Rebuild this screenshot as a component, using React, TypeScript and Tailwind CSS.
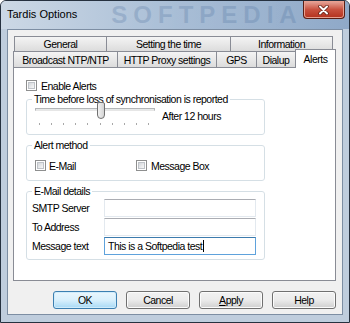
import type { ReactNode } from "react";

const ui = "font-['Liberation_Sans',Arial,sans-serif] text-[10.5px] tracking-[-0.5px] leading-[12px] text-black";

function CheckBox() {
  return (
    <span className="flex h-[11px] w-[11px] shrink-0 items-center justify-center border border-[#8e8f8f] bg-white">
      <span className="h-[7px] w-[7px] border border-[#bfc3c8] bg-linear-to-br from-[#d4d7db] to-[#f8f8f8]" />
    </span>
  );
}

function Tab({ label, w, last }: { label: string; w: string; last?: boolean }) {
  return (
    <div
      className={`${w} flex h-full items-center justify-center border-t border-l border-[#898c95] bg-linear-to-b from-[#f4f4f4] to-[#dcdcdc] whitespace-nowrap ${
        last ? "border-r" : ""
      }`}
    >
      {label}
    </div>
  );
}

function Group({ title, h, children }: { title: string; h: string; children: ReactNode }) {
  return (
    <fieldset className={`${h} w-[239px] rounded-[3px] border border-[#d5dfe5]`}>
      <legend className="ml-[5px] px-[2px] leading-[12px] whitespace-nowrap">{title}</legend>
      {children}
    </fieldset>
  );
}

function TextBox({ value, focused }: { value?: string; focused?: boolean }) {
  return (
    <div
      className={`flex h-[18px] w-[152px] items-center border px-[3px] ${
        focused
          ? "border-[#5fa2dc] border-t-[#3d7bad]"
          : "border-[#e3e9ef] border-t-[#abadb3]"
      } bg-white`}
    >
      {value && (
        <>
          <span className="whitespace-nowrap">{value}</span>
          <span className="ml-px h-[12px] w-px bg-black" />
        </>
      )}
    </div>
  );
}

function Button({ children, primary }: { children: ReactNode; primary?: boolean }) {
  return (
    <div
      className={`flex h-[18px] w-[64px] items-center justify-center rounded-[3px] border ${
        primary
          ? "border-[#3c7fb1] bg-linear-to-b from-[#eaf6fd] via-[#d9f0fc] to-[#a7d9f5] shadow-[inset_0_0_0_1px_#d0ecfb]"
          : "border-[#707070] bg-linear-to-b from-[#f2f2f2] via-[#ebebeb] to-[#cfcfcf] shadow-[inset_0_0_0_1px_#fbfbfb]"
      }`}
    >
      {children}
    </div>
  );
}

export default function App() {
  const ticks = Array.from({ length: 10 }, (_, i) => i);

  return (
    <div className={`${ui} flex h-[323px] w-[350px] flex-col overflow-hidden rounded-t-[6px] border border-[#26313f] bg-[#bfcddd]`}>
      {/* title bar */}
      <div className="flex h-[28px] shrink-0 items-start bg-linear-to-r from-[#ccd8e5] via-[#a9bed6] to-[#8fa9c8]">
        <span className="mt-[7px] ml-[6px] shrink-0 font-['Liberation_Sans',Arial,sans-serif] text-[11px] leading-[13px] tracking-normal whitespace-nowrap text-black">
          Tardis Options
        </span>
        <span className="mt-[1px] ml-[34px] shrink-0 font-['Liberation_Sans',Arial,sans-serif] text-[24px] leading-[26px] font-bold tracking-[6px] whitespace-nowrap text-[#4a6d9a] opacity-25">
          SOFTPEDIA
        </span>
        <div className="mr-[6px] ml-auto flex h-[18px] w-[42px] shrink-0 items-center justify-center rounded-b-[4px] border border-t-0 border-[#5a1e14] bg-linear-to-b from-[#e6a99e] via-[#c8513f] to-[#b3301b] shadow-[inset_0_0_0_1px_#e8a090]">
          <svg width="11" height="10" viewBox="0 0 11 10">
            <path d="M2 1.5 L9 8.5 M9 1.5 L2 8.5" stroke="#5b1b10" strokeWidth="3.4" strokeLinecap="round" />
            <path d="M2 1.5 L9 8.5 M9 1.5 L2 8.5" stroke="#ffffff" strokeWidth="2" strokeLinecap="round" />
          </svg>
        </div>
      </div>

      {/* client area */}
      <div className="mx-[6px] flex h-[286px] shrink-0 flex-col border border-[#7d8ea3] bg-[#f0f0f0] pt-[6px] pr-[6px] pl-[5px]">
        {/* tab strip */}
        <div className="flex h-[15px] pl-px">
          <Tab label="General" w="w-[92px]" />
          <Tab label="Setting the time" w="w-[124px]" />
          <Tab label="Information" w="w-[103px]" last />
        </div>
        <div className="flex h-[16px] items-end">
          <Tab label="Broadcast NTP/NTP" w="w-[104px]" />
          <Tab label="HTTP Proxy settings" w="w-[99px]" />
          <Tab label="GPS" w="w-[40px]" />
          <Tab label="Dialup" w="w-[39px]" />
          <div className="relative z-10 -mb-px flex h-[19px] w-[41px] items-start justify-center border-x border-t border-[#898c95] bg-white pt-[3px]">
            Alerts
          </div>
        </div>

        {/* panel */}
        <div className="flex h-[214px] flex-col border border-[#898c95] bg-white pl-[12px]">
          <label className="mt-[11px] flex h-[13px] items-center gap-[4px]">
            <CheckBox />
            <span>Enable Alerts</span>
          </label>

          <div className="mt-[1px] flex flex-col gap-[4px]">
            <Group title="Time before loss of synchronisation is reported" h="h-[42px]">
              <div className="-mt-[3px] flex items-start pl-[8px]">
                <div className="flex w-[120px] flex-col">
                  <div className="relative h-[17px]">
                    <div className="mt-[6px] h-[3px] w-full border border-[#b4b6b8] border-b-[#e6e6e6] bg-[#e7eaea]" />
                    <div className="absolute top-0 left-[62px] h-[17px] w-[8px] rounded-b-[4px] rounded-t-[2px] border border-[#707070] bg-linear-to-r from-[#f2f2f2] to-[#d4d4d4]" />
                  </div>
                  <div className="mt-[4px] flex justify-between pr-[6px] pl-[4px]">
                    {ticks.map((t) => (
                      <span key={t} className="h-[2px] w-px bg-[#a8a8a8]" />
                    ))}
                  </div>
                </div>
                <span className="mt-[8px] ml-[7px] whitespace-nowrap">After 12 hours</span>
              </div>
            </Group>

            <Group title="Alert method" h="h-[42px]">
              <div className="mt-[8px] flex h-[13px] items-center pl-[8px]">
                <label className="flex w-[101px] items-center gap-[3px]">
                  <CheckBox />
                  <span>E-Mail</span>
                </label>
                <label className="flex items-center gap-[4px]">
                  <CheckBox />
                  <span>Message Box</span>
                </label>
              </div>
            </Group>

            <Group title="E-Mail details" h="h-[75px]">
              <div className="mt-[2px] flex flex-col gap-[1px] pl-[5px]">
                <div className="flex items-center">
                  <span className="w-[72px]">SMTP Server</span>
                  <TextBox />
                </div>
                <div className="flex items-center">
                  <span className="w-[72px]">To Address</span>
                  <TextBox />
                </div>
                <div className="flex items-center">
                  <span className="w-[72px]">Message text</span>
                  <TextBox value="This is a Softpedia test" focused />
                </div>
              </div>
            </Group>
          </div>
        </div>

        {/* buttons */}
        <div className="mt-[10px] flex justify-end gap-[9px]">
          <Button primary>OK</Button>
          <Button>Cancel</Button>
          <Button>
            <span>
              <span className="underline">A</span>pply
            </span>
          </Button>
          <Button>Help</Button>
        </div>
      </div>
    </div>
  );
}
